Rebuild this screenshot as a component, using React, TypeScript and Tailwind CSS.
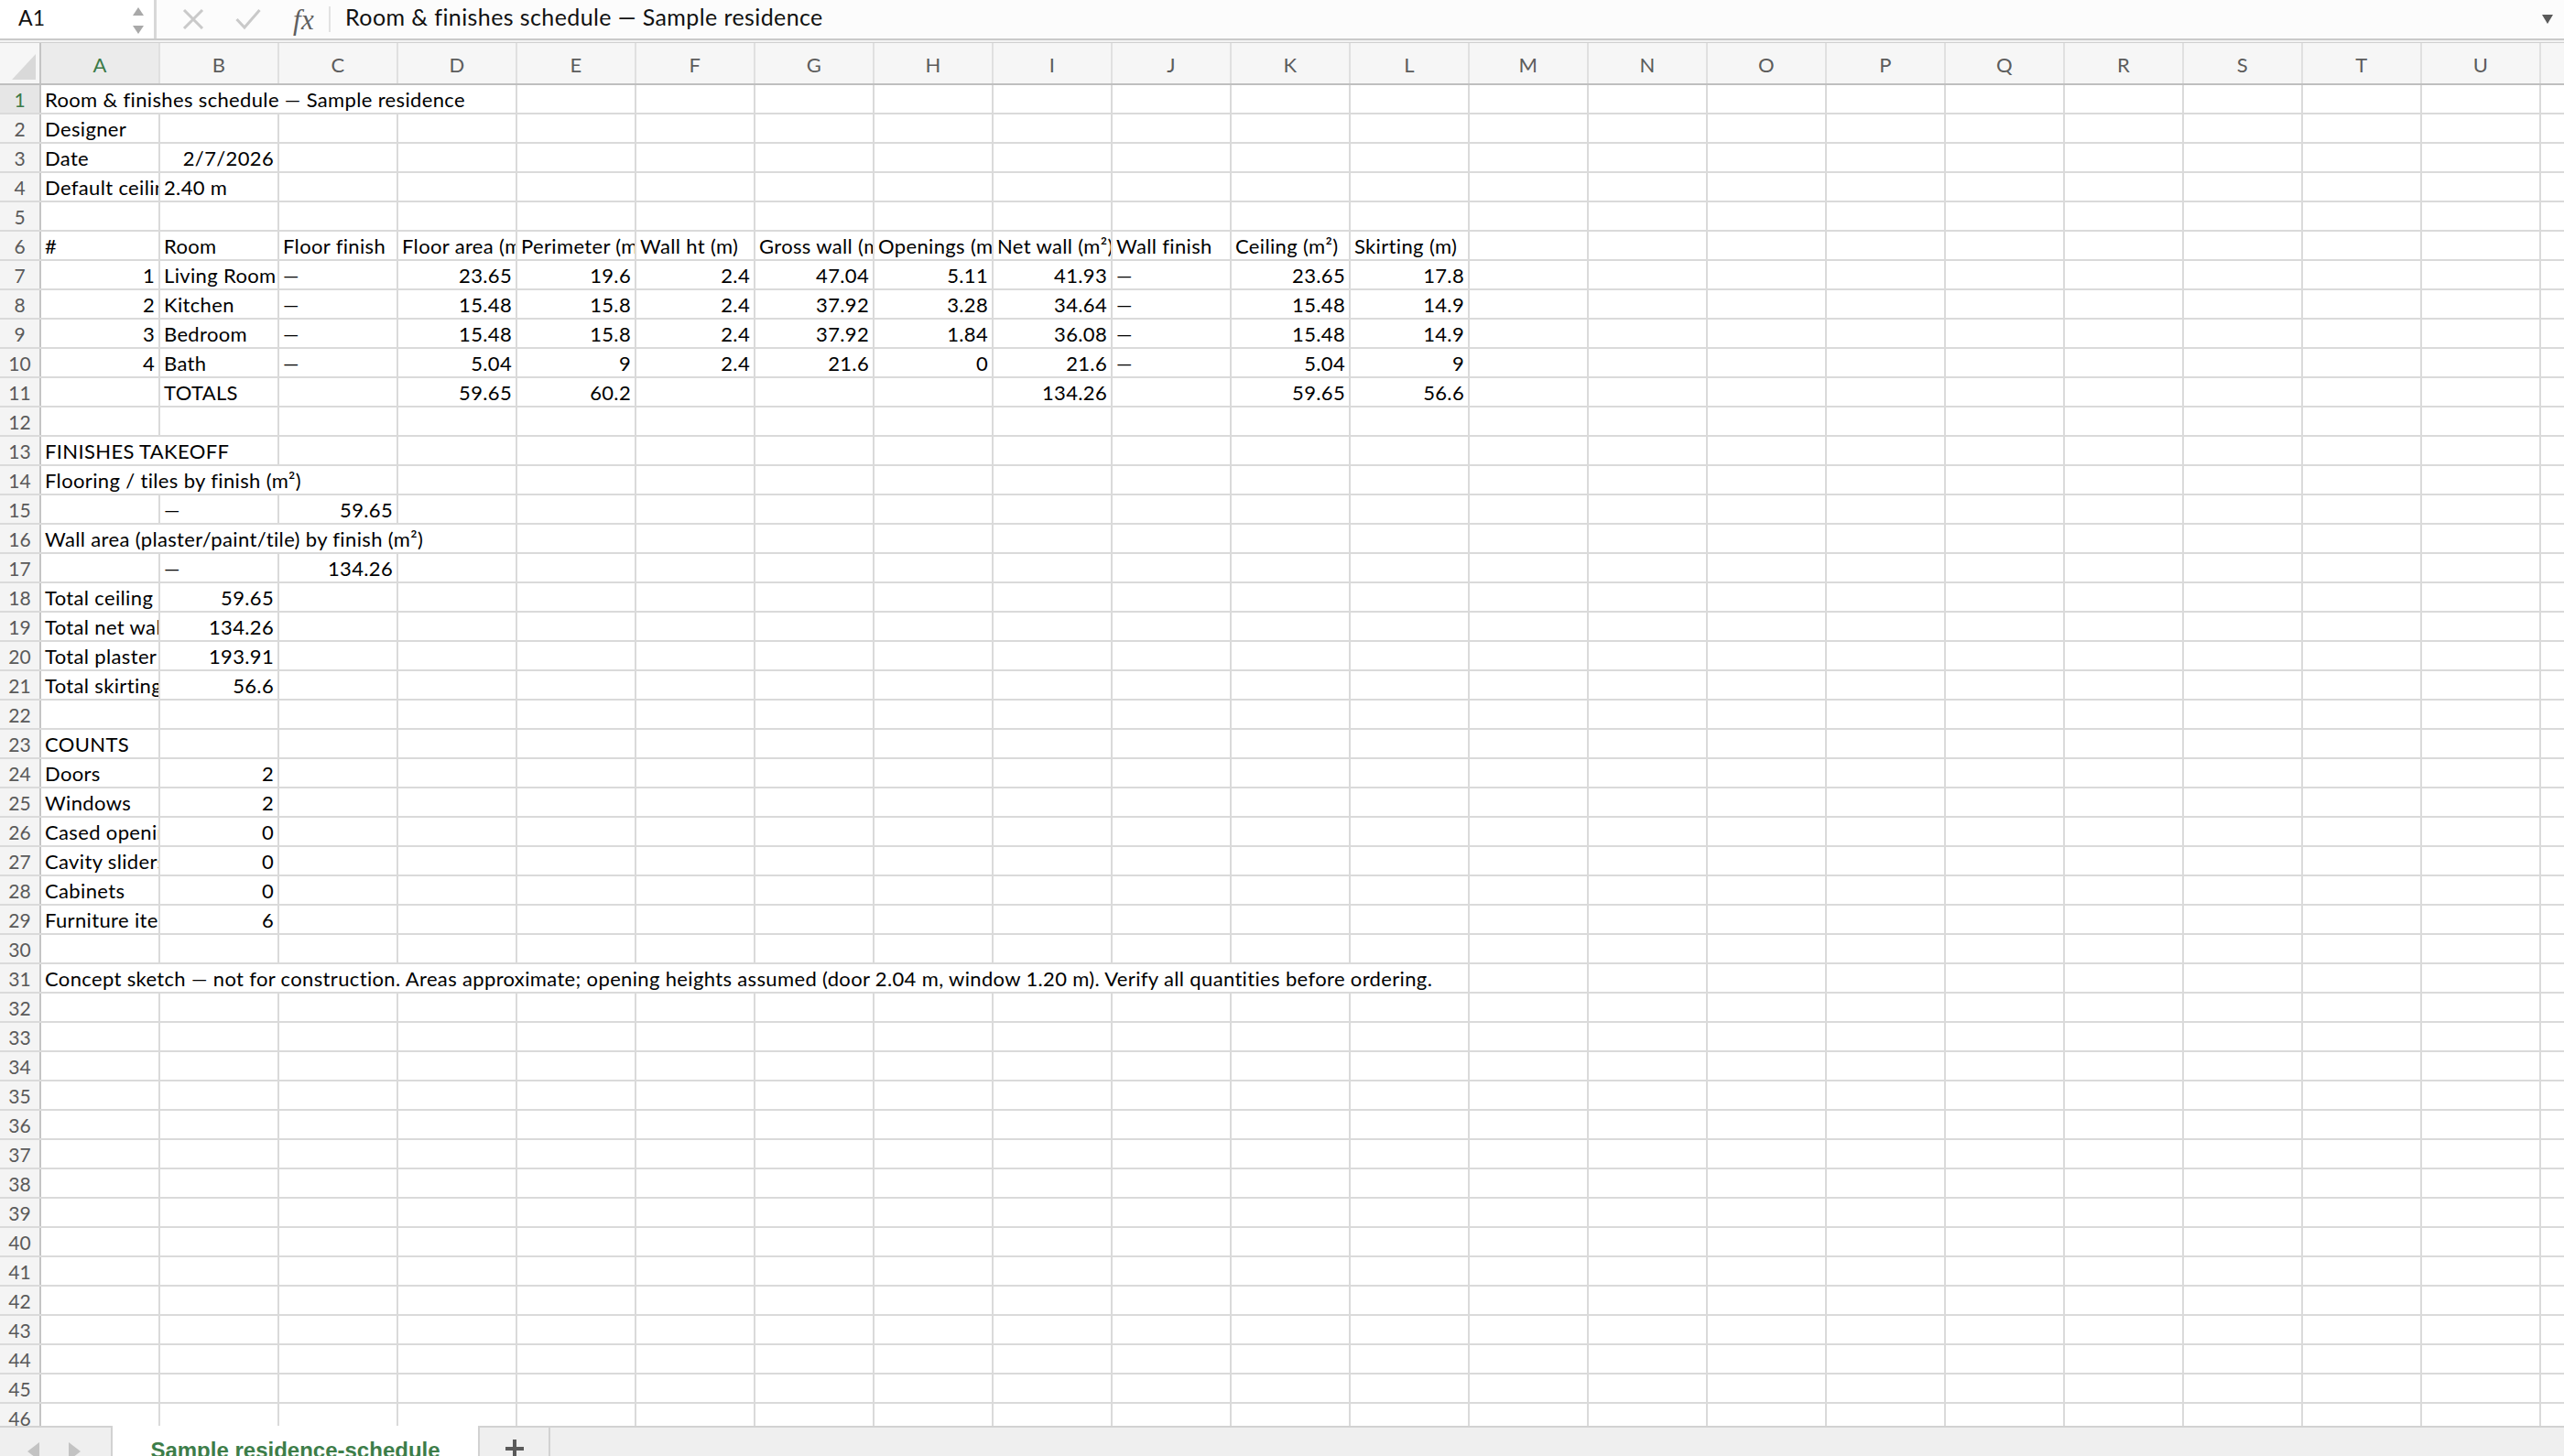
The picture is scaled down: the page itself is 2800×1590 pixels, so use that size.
import { clsx } from 'clsx'

// one cell of the grid: column index, text, right aligned (numbers), span of empty cells it overflows into
type Cell = { c: number; t: string; r?: boolean; s?: number }

const COLS = 'ABCDEFGHIJKLMNOPQRSTUV'.split('')
const ROW_COUNT = 47

const txt = (c: number, t: string, s?: number): Cell => ({ c, t, s })
const num = (c: number, t: string): Cell => ({ c, t, r: true })

const roomRow = (n: string, room: string, v: string[]): Cell[] => [
    num(0, n),
    txt(1, room),
    txt(2, '—'),
    num(3, v[0]),
    num(4, v[1]),
    num(5, v[2]),
    num(6, v[3]),
    num(7, v[4]),
    num(8, v[5]),
    txt(9, '—'),
    num(10, v[6]),
    num(11, v[7]),
]

const sheet: Record<number, Cell[]> = {
    1: [txt(0, 'Room & finishes schedule — Sample residence', 4)],
    2: [txt(0, 'Designer')],
    3: [txt(0, 'Date'), num(1, '2/7/2026')],
    4: [txt(0, 'Default ceiling height'), txt(1, '2.40 m')],
    6: [
        txt(0, '#'),
        txt(1, 'Room'),
        txt(2, 'Floor finish'),
        txt(3, 'Floor area (m²)'),
        txt(4, 'Perimeter (m)'),
        txt(5, 'Wall ht (m)'),
        txt(6, 'Gross wall (m²)'),
        txt(7, 'Openings (m²)'),
        txt(8, 'Net wall (m²)'),
        txt(9, 'Wall finish'),
        txt(10, 'Ceiling (m²)'),
        txt(11, 'Skirting (m)'),
    ],
    7: roomRow('1', 'Living Room', ['23.65', '19.6', '2.4', '47.04', '5.11', '41.93', '23.65', '17.8']),
    8: roomRow('2', 'Kitchen', ['15.48', '15.8', '2.4', '37.92', '3.28', '34.64', '15.48', '14.9']),
    9: roomRow('3', 'Bedroom', ['15.48', '15.8', '2.4', '37.92', '1.84', '36.08', '15.48', '14.9']),
    10: roomRow('4', 'Bath', ['5.04', '9', '2.4', '21.6', '0', '21.6', '5.04', '9']),
    11: [txt(1, 'TOTALS'), num(3, '59.65'), num(4, '60.2'), num(8, '134.26'), num(10, '59.65'), num(11, '56.6')],
    13: [txt(0, 'FINISHES TAKEOFF', 2)],
    14: [txt(0, 'Flooring / tiles by finish (m²)', 3)],
    15: [txt(1, '—'), num(2, '59.65')],
    16: [txt(0, 'Wall area (plaster/paint/tile) by finish (m²)', 4)],
    17: [txt(1, '—'), num(2, '134.26')],
    18: [txt(0, 'Total ceiling (m²)'), num(1, '59.65')],
    19: [txt(0, 'Total net wall (m²)'), num(1, '134.26')],
    20: [txt(0, 'Total plaster (m²)'), num(1, '193.91')],
    21: [txt(0, 'Total skirting (m)'), num(1, '56.6')],
    23: [txt(0, 'COUNTS')],
    24: [txt(0, 'Doors'), num(1, '2')],
    25: [txt(0, 'Windows'), num(1, '2')],
    26: [txt(0, 'Cased openings'), num(1, '0')],
    27: [txt(0, 'Cavity sliders'), num(1, '0')],
    28: [txt(0, 'Cabinets'), num(1, '0')],
    29: [txt(0, 'Furniture items'), num(1, '6')],
    31: [
        txt(
            0,
            'Concept sketch — not for construction. Areas approximate; opening heights assumed (door 2.04 m, window 1.20 m). Verify all quantities before ordering.',
            12
        ),
    ],
}

const spanWidth: Record<number, string> = {
    1: 'w-[130px]',
    2: 'w-[260px]',
    3: 'w-[390px]',
    4: 'w-[520px]',
    12: 'w-[1560px]',
}

function FormulaBar() {
    return (
        <div className="flex h-[44px] shrink-0 items-stretch border-b-2 border-[#cacaca] bg-[#fcfcfc]">
            {/* name box */}
            <div className="flex w-[171px] shrink-0 items-center justify-between border-r-[3px] border-[#d8d8d8] bg-white pb-[3px] pl-[20px] pr-[10px]">
                <span className="text-[23px] tracking-[0.3px] text-[#111]">A1</span>
                <svg width="14" height="32" viewBox="0 0 14 32" className="mt-[3px]">
                    <polygon points="7,3 13,12 1,12" fill="#a9a9a9" />
                    <polygon points="1,23 13,23 7,32" fill="#a9a9a9" />
                </svg>
            </div>
            <div className="flex items-center pl-[28px]">
                <svg width="24" height="22" viewBox="0 0 24 22">
                    <path d="M2 1 L22 21 M22 1 L2 21" stroke="#c9c9c9" strokeWidth="3" />
                </svg>
                <svg width="28" height="24" viewBox="0 0 28 24" className="ml-[34px]">
                    <path d="M1.5 12 L10 21 L26.5 2" stroke="#c9c9c9" strokeWidth="3" fill="none" />
                </svg>
                <span className="ml-[35px] font-['Liberation_Serif',serif] text-[31px] italic leading-none text-[#5f5f5f]">fx</span>
                <div className="ml-[16px] h-[28px] w-[2px] bg-[#e2e2e2]" />
                <span className="mb-[4px] ml-[16px] whitespace-nowrap text-[25px] tracking-[0.4px] text-[#111]">
                    Room &amp; finishes schedule — Sample residence
                </span>
            </div>
            <div className="ml-auto flex items-center pr-[12px]">
                <svg width="12" height="10" viewBox="0 0 12 10">
                    <polygon points="0,0 12,0 6,10" fill="#5a5a5a" />
                </svg>
            </div>
        </div>
    )
}

function ColumnHeader() {
    return (
        <div className="flex h-[47px] shrink-0 border-t border-b-2 border-t-[#d0d0d0] border-b-[#bfbfbf] bg-[#f6f6f6]">
            <div className="flex w-[45px] shrink-0 items-end justify-end border-r-2 border-[#c4c4c4] pb-[4px] pr-[4px]">
                <svg width="26" height="28" viewBox="0 0 26 28">
                    <polygon points="26,0 26,28 0,28" fill="#d9d9d9" />
                </svg>
            </div>
            {COLS.map((col, i) => (
                <div
                    key={col}
                    className={clsx(
                        'flex w-[130px] shrink-0 items-center justify-center border-r-2 border-[#e0e0e0] pt-[2px] text-[22px]',
                        i === 0 ? 'bg-[#ebebeb] text-[#3b7a48]' : 'text-[#5c5c5c]'
                    )}
                >
                    {col}
                </div>
            ))}
        </div>
    )
}

function SheetRow({ n }: { n: number }) {
    const cells = sheet[n] ?? []
    const out = []
    let i = 0
    while (i < COLS.length) {
        const cell = cells.find((x) => x.c === i)
        const span = cell?.s ?? 1
        out.push(
            <div
                key={i}
                className={clsx(
                    spanWidth[span],
                    'flex h-full shrink-0 items-end overflow-hidden whitespace-nowrap border-r-2 border-[#dadada] px-[4px] pb-[1px] leading-[26px]',
                    cell?.r && 'justify-end'
                )}
            >
                {cell?.t}
            </div>
        )
        i += span
    }

    return (
        <div className="flex h-[32px] shrink-0 border-b-2 border-[#dadada]">
            <div
                className={clsx(
                    'flex w-[45px] shrink-0 items-center justify-center border-r-2 border-[#c4c4c4] pt-[2px] text-[21px] tracking-normal',
                    n === 1 ? 'bg-[#e6e6e6] text-[#3b7a48]' : 'bg-[#f4f4f4] text-[#5a5a5a]'
                )}
            >
                {n}
            </div>
            {out}
        </div>
    )
}

function SheetTabs() {
    return (
        <div className="flex h-[33px] shrink-0 bg-[#efefef]">
            <div className="flex w-[121px] shrink-0 items-start gap-[32px] border-t-2 border-[#d2d2d2] pl-[30px] pt-[16px]">
                <svg width="13" height="20" viewBox="0 0 13 20">
                    <polygon points="13,0 13,20 0,10" fill="#c3c3c3" />
                </svg>
                <svg width="13" height="20" viewBox="0 0 13 20">
                    <polygon points="0,0 13,10 0,20" fill="#c3c3c3" />
                </svg>
            </div>
            <div className="flex w-[403px] shrink-0 justify-center overflow-hidden border-x-2 border-[#d2d2d2] bg-white pt-[13px]">
                <span className="whitespace-nowrap font-['Liberation_Sans',sans-serif] text-[24px] font-bold leading-[28px] tracking-normal text-[#3d7d49]">
                    Sample residence-schedule
                </span>
            </div>
            <div className="flex w-[77px] shrink-0 justify-center border-t-2 border-r-2 border-[#d2d2d2] pt-[13px]">
                <svg width="20" height="20" viewBox="0 0 20 20">
                    <path d="M10 0 V20 M0 10 H20" stroke="#5a5a5a" strokeWidth="4" />
                </svg>
            </div>
            <div className="flex-1 border-t-2 border-[#d2d2d2]" />
        </div>
    )
}

export default function App() {
    return (
        <div className="flex h-screen w-full flex-col overflow-hidden bg-white font-[Lato,'Liberation_Sans',sans-serif] text-[22px] tracking-[0.35px] text-black">
            <FormulaBar />
            <div className="h-[2px] shrink-0 bg-[#f3f3f3]" />
            <ColumnHeader />
            <div className="flex min-h-0 flex-1 flex-col overflow-hidden">
                {Array.from({ length: ROW_COUNT }, (_, k) => (
                    <SheetRow key={k + 1} n={k + 1} />
                ))}
            </div>
            <SheetTabs />
        </div>
    )
}
